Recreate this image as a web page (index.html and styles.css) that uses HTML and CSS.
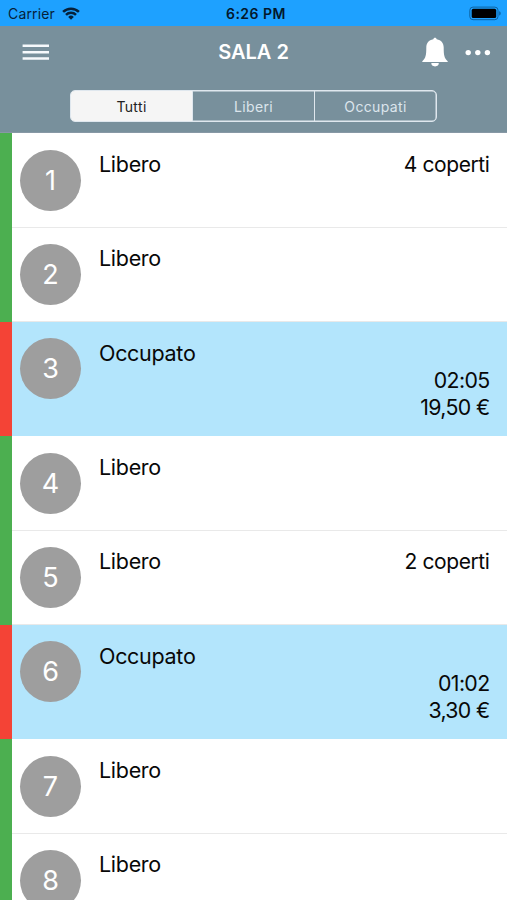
FILE: index.html
```html
<!DOCTYPE html>
<html lang="it">
<head>
<meta charset="utf-8">
<meta name="viewport" content="width=device-width">
<title>Sala 2</title>
<link rel="stylesheet" href="styles.css">
</head>
<body>
<div class="status">
  <div class="carrier"><span>Carrier</span>
    <svg class="wifi" viewBox="0 0 18 13" width="18" height="13"><g fill="none" stroke="#06213a" stroke-width="2.5"><path d="M1.1 4.9a11.2 11.2 0 0 1 15.8 0"/><path d="M4 7.9a7.1 7.1 0 0 1 10 0"/></g><path fill="#06213a" d="M6.2 9.9a4 4 0 0 1 5.6 0L9 12.7z"/></svg>
  </div>
  <div class="clock">6:26 PM</div>
  <svg class="battery" viewBox="0 0 33 14" width="33" height="14"><rect x=".8" y=".1" width="28.2" height="12.6" rx="3.2" fill="none" stroke="#0d63a2" stroke-width="1"/><rect x="2.7" y="1.8" width="24.5" height="9.3" rx="1.6" fill="#000"/><path d="M30.2 4.3c2 .7 2 3.6 0 4.3z" fill="#0d63a2"/></svg>
</div>
<header class="header">
  <div class="bar">
    <svg class="menu" viewBox="0 0 27 17" width="27" height="17"><path d="M.6 1.7H27M.6 8.2H27M.6 14.6H27" stroke="#f6f9fc" stroke-width="2.5"/></svg>
    <h1 class="title">SALA 2</h1>
    <div class="actions">
      <svg viewBox="0 0 26 30" width="26" height="30"><path fill="#fff" d="M13 .8c1 0 1.5.6 1.7 1.5 4.6.8 7 3.9 7 8.2 0 7.2.4 10.5 4 13.8v.8H.3v-.8c3.600-3.300 4-6.600 4-13.800 0-4.300 2.400-7.400 7-8.200C11.500 1.400 12 .8 13 .8zM9.300 26.100h7.500a3.750 3.300 0 0 1-7.500 0z"/></svg>
      <svg viewBox="0 0 26 6" width="26" height="6"><g fill="#fff"><circle cx="3.2" cy="3.6" r="2.7"/><circle cx="12.8" cy="3.6" r="2.7"/><circle cx="22.4" cy="3.6" r="2.7"/></g></svg>
    </div>
  </div>
  <nav class="segments"><span class="segment selected">Tutti</span><span class="segment">Liberi</span><span class="segment">Occupati</span></nav>
</header>
<main class="tables">
  <section class="row"><div class="number">1</div><div class="state">Libero</div><div class="covers">4 coperti</div></section>
  <section class="row"><div class="number">2</div><div class="state">Libero</div></section>
  <section class="row busy"><div class="number">3</div><div class="state">Occupato</div><div class="bill"><div>02:05</div><div>19,50 €</div></div></section>
  <section class="row"><div class="number">4</div><div class="state">Libero</div></section>
  <section class="row"><div class="number">5</div><div class="state">Libero</div><div class="covers">2 coperti</div></section>
  <section class="row busy"><div class="number">6</div><div class="state">Occupato</div><div class="bill"><div>01:02</div><div>3,30 €</div></div></section>
  <section class="row"><div class="number">7</div><div class="state">Libero</div></section>
  <section class="row"><div class="number">8</div><div class="state">Libero</div></section>
</main>
</body>
</html>
```
FILE: styles.css
```css
* { box-sizing: border-box; }
body {
  margin: 0;
  height: 900px;
  overflow: hidden;
  display: flex;
  flex-direction: column;
  background: #fff;
  color: #080808;
  font-family: Inter, "Liberation Sans", sans-serif;
}
svg { display: block; flex: none; overflow: visible; }
.status {
  flex: none;
  display: grid;
  grid-template-columns: 1fr auto 1fr;
  align-items: center;
  height: 26px;
  padding: 1px 5px 0 8px;
  background: #1ea1ff;
}
.carrier {
  display: flex;
  align-items: center;
  gap: 7px;
  font-size: 14px;
  letter-spacing: .15px;
  color: #06213a;
}
.clock { font-size: 14px; font-weight: 600; letter-spacing: .5px; margin-left: 2px; color: #03182c; }
.battery { justify-self: end; }
.header {
  flex: none;
  height: 107.2px;
  background: #78909c;
  border-bottom: 1px solid #8798a5;
}
.bar {
  display: grid;
  grid-template-columns: 1fr auto 1fr;
  align-items: center;
  height: 52px;
  padding: 0 16px 0 22px;
}
.title { margin: 0 6px 0 0; font-size: 20px; line-height: 24px; font-weight: 600; color: #fff; }
.actions { display: flex; align-items: center; justify-content: flex-end; gap: 17px; }
.segments {
  display: flex;
  width: 367px;
  height: 32px;
  margin: 12px 0 0 70px;
  border: 1px solid #dfe7ee;
  box-shadow: inset 0 0 0 .5px #dfe7ee;
  border-radius: 5px;
  overflow: hidden;
}
.segment {
  flex: 1;
  display: flex;
  align-items: center;
  justify-content: center;
  font-size: 14px;
  letter-spacing: .35px;
  color: #dce5ec;
}
.segment + .segment { border-left: 1px solid #dfe7ee; }
.selected { background: #f5f5f5; color: #222; }
.tables { flex: none; }
.row {
  display: flex;
  align-items: flex-start;
  height: 94.4px;
  padding: 16.4px 17.5px 0 8px;
  border-left: 12px solid #4caf50;
  box-shadow: inset 0 -1px #e9e9e9;
  font-size: 21.5px;
  line-height: 27px;
}
.number {
  display: flex;
  align-items: center;
  justify-content: center;
  width: 61px;
  height: 61px;
  margin-right: 18px;
  border-radius: 50%;
  background: #9e9e9e;
  color: #fff;
  font-size: 27px;
}
.state { margin-top: 1.1px; letter-spacing: -.3px; }
.covers { margin: 1.1px 0 0 auto; font-size: 21px; letter-spacing: -.4px; }
.busy {
  height: 114.3px;
  border-left-color: #f44336;
  background: #b3e5fc;
  box-shadow: none;
}
.busy .state { margin-top: 1.3px; }
.bill { margin: 28.3px 0 0 auto; text-align: right; font-size: 21.3px; letter-spacing: -.65px; }
```
